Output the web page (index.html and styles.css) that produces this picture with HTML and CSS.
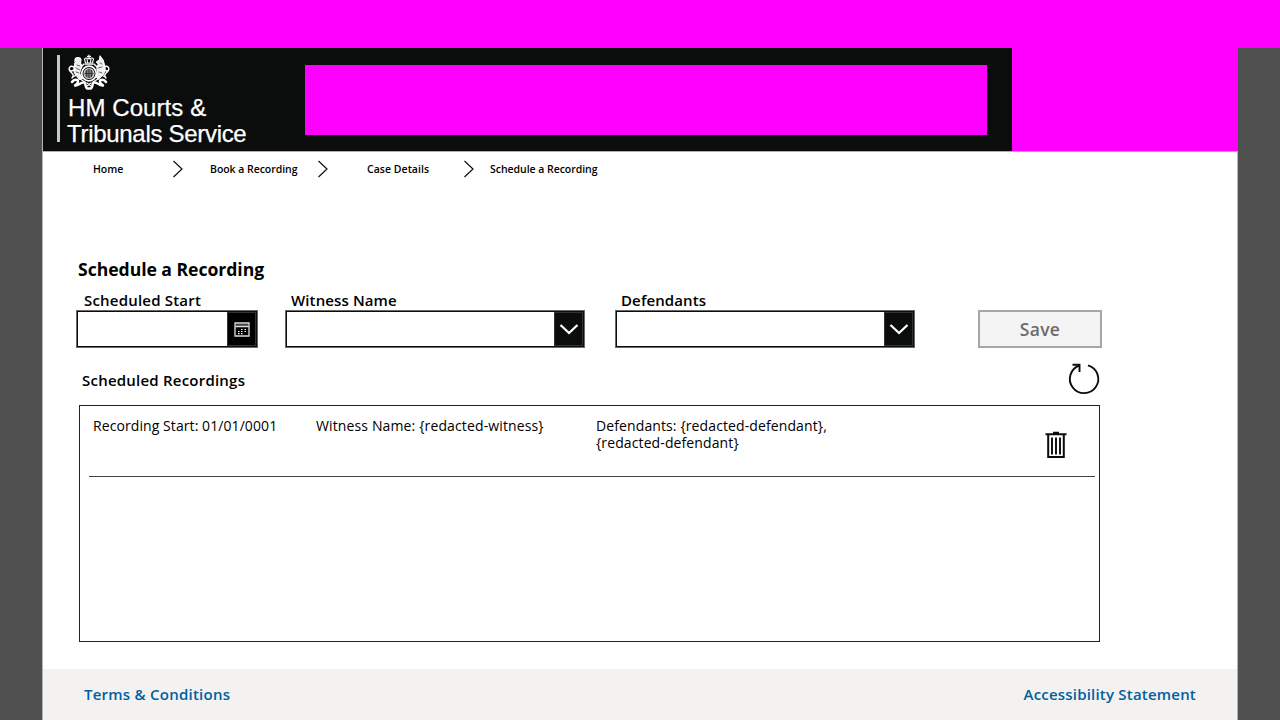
FILE: index.html
```html
<!DOCTYPE html>
<html lang="en">
<head>
<meta charset="utf-8">
<title>Schedule a Recording</title>
<link rel="stylesheet" href="styles.css">
</head>
<body>
<div class="top-band"></div>
<div class="app">
  <header class="header">
    <div class="brand">
      <svg class="crest" width="44" height="38" viewBox="0 0 44 38" fill="none" stroke="#fff" stroke-linecap="round" stroke-linejoin="round">
        <g stroke-width="1.1">
          <path d="M22 1v4M20.5 2.400h3M17.500 5l1 4h7l1-4M17.500 5c1.500-2 3-1 4.500 0c1.500-1 3-2 4.500 0M18 10.300h8M20 5l.5 3M24 5l-.5 3"/>
          <circle cx="22" cy="19.500" r="7.300" stroke-width="1.700"/>
          <circle cx="22" cy="19.500" r="5" fill="#777" stroke="#ddd"/>
          <path d="M22 15v9M18 19.500h8M19.500 16.500v6M24.500 16.500v6" stroke="#222" stroke-width=".7"/>
        </g>
        <path d="M8 6c0-3 5-3.500 6-.5l-.5 4c2 2 1.500 4 0 6l-1 4 3 5-3 1-4-5c-2-3-2-6-1-8z" fill="#eee" stroke-width="1.200"/>
        <path d="M36 6l-3-4-.5 4-3 2 2 2c-2 3-2 5-1 8l-1 5 2 2 5-5c2-3 2-6 1-9z" fill="#eee" stroke-width="1.200"/>
        <path d="M8 8l-2 2M10 11l3 1M9 14l4 2M9 18l3 1M33 9l2 1M31 14l4-1M32 18l3 1" stroke="#333" stroke-width=".7"/>
        <path d="M7 13c-4-2-6 1-4 4s5 3 2 7M37 13c4-2 6 1 4 4s-5 3-2 7M8 16l-4 1M36 16l4 1M11 20l-5 3M33 20l5 3M14 13l3-3M30 13l-3-3" stroke-width="1.400"/>
        <path d="M5 28c2-3 6-3 6-.5s-3 3-3 4c3 1 6-4 9-3 2 0 1 5 3 6h4c2-1 1-6 3-6 3-1 6 4 9 3 0-1-3-1.500-3-4s4-2.500 6 .5" stroke-width="2.500"/>
        <path d="M13 25l5 3M31 25l-5 3M20 29l4 3M24 29l-4 3" stroke-width="1.300"/>
      </svg>
      <span class="brand-line brand-first">HM Courts &amp;</span>
      <span class="brand-line brand-second">Tribunals Service</span>
    </div>
    <div class="header-title"></div>
    <div class="header-user"></div>
  </header>

  <nav class="crumbs">
    <a class="crumb c-home">Home</a>
    <svg class="chev" width="12" height="18" viewBox="0 0 12 18"><path d="M1.500 1l8.500 8-8.500 8"/></svg>
    <a class="crumb c-book">Book a Recording</a>
    <svg class="chev" width="12" height="18" viewBox="0 0 12 18"><path d="M1.500 1l8.500 8-8.500 8"/></svg>
    <a class="crumb c-case">Case Details</a>
    <svg class="chev" width="12" height="18" viewBox="0 0 12 18"><path d="M1.500 1l8.500 8-8.500 8"/></svg>
    <a class="crumb c-sched">Schedule a Recording</a>
  </nav>

  <main class="main">
    <h1 class="title">Schedule a Recording</h1>
    <div class="form">
      <div class="field date">
        <label class="label">Scheduled Start</label>
        <div class="box">
          <div class="box-btn date-btn">
            <svg width="16" height="15" viewBox="0 0 16 15"><path d="M1 1h14v13H1zM1 4.500h14" fill="none" stroke="#ddd" stroke-width="1.300"/><path d="M1 3h14" stroke="#888"/><path d="M7 7.500h1.500M10.500 7.500H12M4 9.500h1.500M7 9.500h1.500M10.500 9.500H12M4 11.700h1.500M7 11.700h1.500" stroke="#fff" stroke-width="1.200"/></svg>
          </div>
        </div>
      </div>
      <div class="field witness">
        <label class="label">Witness Name</label>
        <div class="box"><div class="box-btn"><svg width="20" height="12" viewBox="0 0 20 12"><path d="M1.500 2l8.500 8L18.500 2" fill="none" stroke="#fff" stroke-width="2.300"/></svg></div></div>
      </div>
      <div class="field defendants">
        <label class="label">Defendants</label>
        <div class="box"><div class="box-btn"><svg width="20" height="12" viewBox="0 0 20 12"><path d="M1.500 2l8.500 8L18.500 2" fill="none" stroke="#fff" stroke-width="2.300"/></svg></div></div>
      </div>
      <button class="save" disabled>Save</button>
    </div>

    <div class="list-head">
      <h2 class="list-title">Scheduled Recordings</h2>
      <svg class="refresh" width="34" height="34" viewBox="0 0 34 34" fill="none" stroke="#0b0c0c" stroke-width="1.900"><path d="M21 3.300A14.200 14.200 0 1 1 12.500 3.500"/><path d="M5.500 2.800h7v7.200"/></svg>
    </div>

    <div class="list">
      <div class="row">
        <div class="cell start">Recording Start: 01/01/0001</div>
        <div class="cell name">Witness Name: {redacted-witness}</div>
        <div class="cell defs">Defendants: {redacted-defendant},<br>{redacted-defendant}</div>
        <svg class="trash" width="22" height="28" viewBox="0 0 22 28"><path d="M.5 3.200h21M8 1.700h6" fill="none" stroke="#0b0c0c" stroke-width="2"/><path d="M3.200 4v22h15.600V4" fill="none" stroke="#0b0c0c" stroke-width="2"/><path d="M7 6.500v17M11 6.500v17M15 6.500v17" stroke="#0b0c0c" stroke-width="1.900"/></svg>
      </div>
    </div>
  </main>

  <footer class="footer">
    <a class="foot-link terms">Terms &amp; Conditions</a>
    <a class="foot-link access">Accessibility Statement</a>
  </footer>
</div>
</body>
</html>
```
FILE: styles.css
```css
* { box-sizing: border-box; }
body { margin: 0; width: 1280px; height: 720px; overflow: hidden; background: #505050; font-family: "Open Sans", sans-serif; font-weight: 600; color: #000; }
h1, h2 { margin: 0; }
svg { display: block; flex: none; }
.top-band { height: 48px; background: #f0f; }
.app { width: 1196px; height: 672px; margin-left: 42px; background: #fff; border-left: 1px solid #b4b4b4; border-right: 1px solid #b4b4b4; display: flex; flex-direction: column; }
.header { height: 103px; background: #0b0c0c; display: flex; margin-right: -1px; flex: none; }
.brand { margin: 7px 0 0 14px; width: 248px; height: 87px; border-left: 3px solid #c8c8c8; padding-left: 8px; display: flex; flex-direction: column; }
.crest { margin: -1px 0 0 -1px; }
.brand-line { color: #fff; font: 400 24px/26px "Liberation Sans", sans-serif; white-space: nowrap; -webkit-text-stroke: .25px #fff; }
.brand-first { margin-top: 3px; letter-spacing: .08px; }
.brand-second { margin-left: -1px; letter-spacing: -.3px; }
.header-title { width: 682px; height: 70px; margin-top: 17px; background: #f0f; }
.header-user { margin-left: 25px; flex: 1; background: #f0f; }
.crumbs { height: 34px; border-top: 1px solid #b0b0b0; display: flex; align-items: center; font-size: 10.500px; line-height: 14px; letter-spacing: -.04px; white-space: nowrap; flex: none; padding-left: 50px; }
.crumb { flex: none; }
.c-home { width: 79px; }
.c-book { width: 107px; margin-left: 26px; }
.c-case { width: 96px; margin-left: 38px; letter-spacing: .04px; }
.c-sched { margin-left: 15px; }
.chev path { fill: none; stroke: #111; stroke-width: 1.200; }
.main { padding-left: 34px; flex: 1; }
.title { margin: 72px 0 0 1px; font-size: 17.600px; font-weight: 700; line-height: 24px; letter-spacing: -.04px; }
.form { display: flex; margin-top: 9px; align-items: flex-end; margin-left: -1px; }
.label { display: block; font-size: 15px; line-height: 20px; padding-left: 6px; white-space: nowrap; letter-spacing: .12px; }
.date { width: 182px; }
.date .label { padding-left: 8px; letter-spacing: .2px; }
.witness { width: 300px; margin-left: 27px; }
.defendants { width: 300px; margin-left: 30px; }
.box { height: 38px; border: 1px solid #686868; box-shadow: inset 0 0 0 1px #0b0c0c; padding: 1px; display: flex; justify-content: flex-end; }
.box-btn { width: 29px; background: #0b0c0c; display: flex; align-items: center; justify-content: center; box-shadow: inset 0 0 0 1px #333; }
.date-btn { background: #000; }
.save { width: 124px; height: 38px; margin-left: 63px; padding: 0; border: 2px solid #a6a6a6; background: #f4f4f4; color: #6b6b6b; font: 600 17.500px/24px "Open Sans", sans-serif; letter-spacing: .3px; }
.list-head { height: 57px; width: 1024px; display: flex; justify-content: space-between; padding: 14px 0 0 5px; }
.list-title { font-size: 15px; font-weight: 600; line-height: 20px; margin-top: 8px; letter-spacing: .22px; }
.list { margin-left: 2px; width: 1021px; height: 237px; border: 1px solid #222; padding: 0 4px 0 9px; }
.row { display: flex; height: 71px; border-bottom: 1px solid #444; font-size: 14px; font-weight: 400; line-height: 17px; padding: 11px 0 0 4px; white-space: nowrap; letter-spacing: .11px; }
.start { width: 223px; letter-spacing: .08px; }
.name { width: 280px; letter-spacing: .13px; }
.defs { width: 449px; }
.trash { margin-top: 14px; }
.footer { height: 51px; background: #f3f2f1; display: flex; justify-content: space-between; padding: 15px 41px 0 41px; font-size: 15px; line-height: 20px; letter-spacing: .2px; flex: none; color: #00619f; }
.terms { letter-spacing: .24px; }
```
